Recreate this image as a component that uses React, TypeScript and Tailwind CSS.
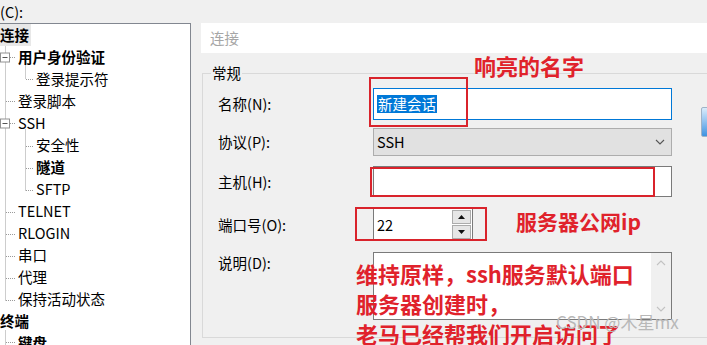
import React from "react";

type TreeItem = {
  label: string;
  level: 0 | 1 | 2;
  bold?: boolean;
  selected?: boolean;
};

const TREE: TreeItem[] = [
  { label: "连接", level: 0, bold: true, selected: true },
  { label: "用户身份验证", level: 1, bold: true },
  { label: "登录提示符", level: 2 },
  { label: "登录脚本", level: 1 },
  { label: "SSH", level: 1 },
  { label: "安全性", level: 2 },
  { label: "隧道", level: 2, bold: true },
  { label: "SFTP", level: 2 },
  { label: "TELNET", level: 1 },
  { label: "RLOGIN", level: 1 },
  { label: "串口", level: 1 },
  { label: "代理", level: 1 },
  { label: "保持活动状态", level: 1 },
  { label: "终端", level: 0, bold: true },
  { label: "键盘", level: 1, bold: true },
];

const INDENT: Record<number, string> = {
  0: "pl-0",
  1: "pl-[18px]",
  2: "pl-[36px]",
};

const FONT = { fontFamily: '"Noto Sans CJK SC", "Noto Sans", sans-serif' };

// tree connector drawing, coords relative to panel content box (page y - 24)
function TreeLines() {
  const y = (py: number) => py - 24 + 0.5;
  const dot = { stroke: "#9a9a9a", strokeWidth: 1, strokeDasharray: "1 1" };
  const box = (cy: number) => (
    <g key={cy}>
      <rect x={0.5} y={y(cy) - 4.5} width={9} height={9} fill="#fff" stroke="#919191" />
      <line x1={2.5} x2={7.5} y1={y(cy)} y2={y(cy)} stroke="#555" />
      <line x1={10} x2={15} y1={y(cy)} y2={y(cy)} {...dot} />
    </g>
  );
  return (
    <svg className="absolute left-0 top-0" width={190} height={330}>
      <line x1={5.5} x2={5.5} y1={y(45)} y2={y(300)} {...dot} />
      {[101, 212, 234, 256, 278, 300].map((cy) => (
        <line key={cy} x1={6} x2={15} y1={y(cy)} y2={y(cy)} {...dot} />
      ))}
      <line x1={25.5} x2={25.5} y1={y(63)} y2={y(79)} {...dot} />
      <line x1={26} x2={34} y1={y(79)} y2={y(79)} {...dot} />
      <line x1={25.5} x2={25.5} y1={y(129)} y2={y(190)} {...dot} />
      {[146, 168, 190].map((cy) => (
        <line key={cy} x1={26} x2={34} y1={y(cy)} y2={y(cy)} {...dot} />
      ))}
      <line x1={5.5} x2={5.5} y1={y(330)} y2={y(345)} {...dot} />
      <line x1={6} x2={15} y1={y(342)} y2={y(342)} {...dot} />
      {box(57)}
      {box(123)}
    </svg>
  );
}

function Tree() {
  return (
    <div className="relative shrink-0 w-[191px] h-[330px] bg-white border-t border-r border-[#828790] overflow-hidden">
      <TreeLines />
      <div className="relative flex flex-col">
        {TREE.map((item, i) => (
          <div
            key={i}
            className={`h-[22px] flex items-center text-[14.5px] text-black whitespace-nowrap ${INDENT[item.level]} ${
              item.bold ? "font-bold" : ""
            }`}
          >
            <span className={item.selected ? "bg-[#e8e8e8] pr-[2px]" : ""}>{item.label}</span>
          </div>
        ))}
      </div>
    </div>
  );
}

function Field({
  label,
  h,
  mt,
  alignTop,
  children,
}: {
  label: string;
  h: string;
  mt: string;
  alignTop?: boolean;
  children: React.ReactNode;
}) {
  return (
    <div className={`flex ${alignTop ? "items-start" : "items-center"} ${h} ${mt}`}>
      <div className="w-[155px] shrink-0 text-[14.5px] text-black">{label}</div>
      {children}
    </div>
  );
}

function Chevron({ up, color = "#555" }: { up?: boolean; color?: string }) {
  return (
    <svg width="10" height="6" viewBox="0 0 10 6">
      <path d={up ? "M1 5 L5 1 L9 5" : "M1 1 L5 5 L9 1"} fill="none" stroke={color} strokeWidth="1.1" />
    </svg>
  );
}

function Triangle({ up }: { up?: boolean }) {
  return (
    <svg width="7" height="4" viewBox="0 0 7 4">
      <path d={up ? "M0 4 L3.5 0 L7 4 Z" : "M0 0 L3.5 4 L7 0 Z"} fill="#111" />
    </svg>
  );
}

function ConnectionForm() {
  return (
    <div className="flex flex-col shrink-0 w-[540px]">
      <div className="h-[30px] bg-white flex items-center pl-[9px] text-[14.5px] text-[#a6a6a6]">
        连接
      </div>
      <div className="relative mt-[20px] ml-[1px] w-[539px] h-[265px] border border-[#d9d9d9] pl-[15px]">
        <span className="absolute left-[8px] -top-[11px] bg-[#f0f0f0] px-px text-[14.5px] text-black leading-[20px]">
          常规
        </span>
        <Field label="名称(N):" h="h-[32px]" mt="mt-[14px]">
          <div className="w-[299px] h-full bg-white border border-[#0078d7] flex items-center pl-[3px]">
            <span className="bg-[#0078d7] text-white text-[14.5px] leading-[18px] px-px">新建会话</span>
          </div>
        </Field>
        <Field label="协议(P):" h="h-[28px]" mt="mt-[8px]">
          <div className="w-[299px] h-full bg-[#e1e1e1] border border-[#adadad] flex items-center justify-between pl-[3px] pr-[6px] text-[14.5px] text-black">
            <span>SSH</span>
            <Chevron />
          </div>
        </Field>
        <Field label="主机(H):" h="h-[31px]" mt="mt-[10px]">
          <div className="w-[299px] h-full bg-white border border-[#7a7a7a]" />
        </Field>
        <Field label="端口号(O):" h="h-[33px]" mt="mt-[11px]">
          <div className="w-[100px] h-full bg-white border border-[#7a7a7a] flex items-center justify-between pl-[3px] pr-[1px] text-[14.5px] text-black">
            <span>22</span>
            <div className="flex flex-col gap-px">
              <div className="w-[19px] h-[14px] bg-[#e6e6e6] border border-[#acacac] flex items-center justify-center">
                <Triangle up />
              </div>
              <div className="w-[19px] h-[14px] bg-[#e6e6e6] border border-[#acacac] flex items-center justify-center">
                <Triangle />
              </div>
            </div>
          </div>
        </Field>
        <Field label="说明(D):" h="h-[68px]" mt="mt-[11px]" alignTop>
          <div className="w-[299px] h-full bg-white border border-[#7a7a7a] flex justify-end">
            <div className="w-[20px] h-full bg-[#f0f0f0] flex flex-col items-center justify-between py-[7px]">
              <Chevron up color="#c2c2c2" />
              <Chevron color="#c2c2c2" />
            </div>
          </div>
        </Field>
      </div>
    </div>
  );
}

export default function App() {
  return (
    <div className="relative w-[707px] h-[345px] overflow-hidden bg-[#f0f0f0]" style={FONT}>
      <div className="h-[23px] pt-[2px] text-[14.5px] text-black leading-[20px]">(C):</div>
      <div className="flex gap-[10px]">
        <Tree />
        <ConnectionForm />
      </div>

      {/* partly visible icon on right edge */}
      <div className="absolute left-[701px] top-[107px] w-[14px] h-[30px] rounded-[2px] border border-[#9fb3c8] bg-gradient-to-b from-[#d9ecfb] to-[#3d93e0]" />

      {/* annotations */}
      <div className="absolute left-[369px] top-[77px] w-[99px] h-[50px] border-2 border-[#d9232b]" />
      <div className="absolute left-[370px] top-[167px] w-[285px] h-[30px] border-2 border-[#d9232b]" />
      <div className="absolute left-[355px] top-[207px] w-[132px] h-[34px] border-2 border-[#d9232b]" />
      <div className="absolute left-[474px] top-[50px] text-[22px] font-bold text-[#e0222b] leading-[30px]">
        响亮的名字
      </div>
      <div className="absolute left-[516px] top-[206px] text-[21px] font-bold text-[#e0222b] leading-[30px]">
        服务器公网ip
      </div>
      <div className="absolute left-[356px] top-[258px] text-[22px] font-bold text-[#e0222b] leading-[30px] whitespace-nowrap">
        <div>维持原样，ssh服务默认端口</div>
        <div>服务器创建时，</div>
        <div>老马已经帮我们开启访问了</div>
      </div>
      <div className="absolute left-[556px] top-[310px] text-[17px] text-[#b8b8b8] leading-[24px] whitespace-nowrap">
        CSDN @木星mx
      </div>
    </div>
  );
}
